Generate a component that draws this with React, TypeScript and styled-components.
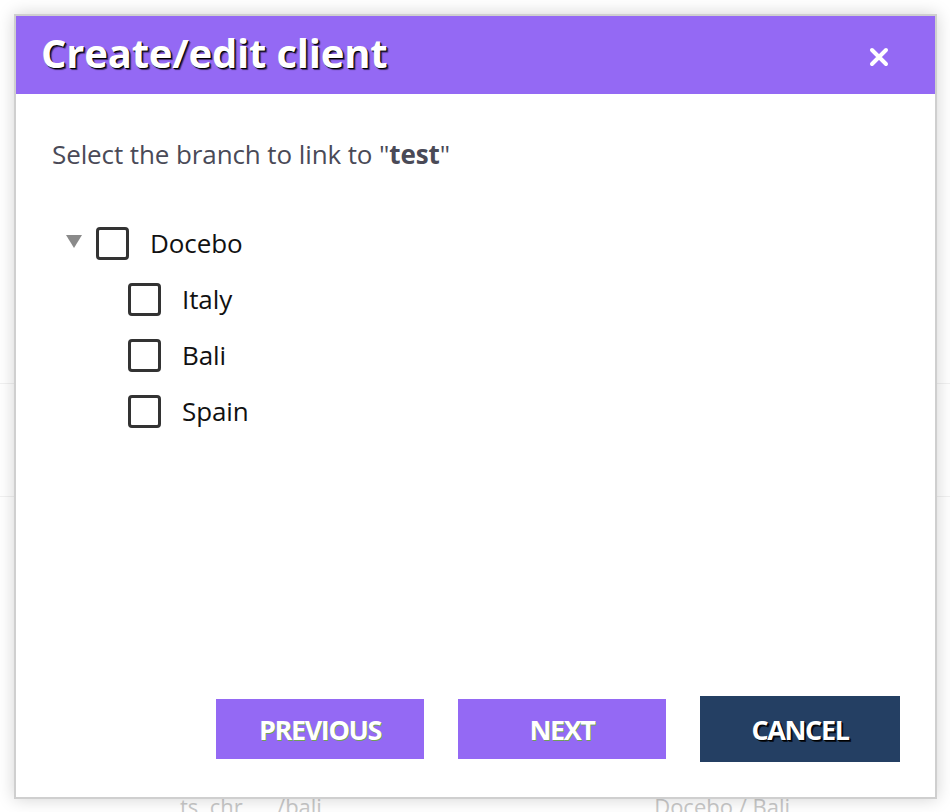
import React from "react";
import styled, { createGlobalStyle } from "styled-components";

const Global = createGlobalStyle`
  html, body { margin: 0; padding: 0; background: #ffffff; }
  body { font-family: "Open Sans", "Noto Sans", sans-serif; width: 950px; height: 812px; overflow: hidden; }
`;

const Page = styled.div`
  position: relative;
  width: 950px;
  height: 812px;
  overflow: hidden;
  background: #fff;
`;

const BgList = styled.div`
  display: flex;
  flex-direction: column;
  padding-top: 271px;
`;

const BgRow = styled.div<{ $h: number }>`
  height: ${(p) => p.$h}px;
  border-bottom: 1px solid #f1f1f1;
  display: flex;
  align-items: flex-end;
  justify-content: space-between;
  padding: 0 160px 0 180px;
  color: #c9c9c9;
  font-size: 22px;
  line-height: 26px;
`;

const Dialog = styled.div`
  position: absolute;
  left: 14px;
  top: 14px;
  width: 919px;
  height: 781px;
  border: 2px solid #cfcfcf;
  background: #fff;
  box-shadow: 0 0 16px rgba(0, 0, 0, 0.18);
  display: flex;
  flex-direction: column;
`;

const Header = styled.div`
  height: 78px;
  background: #9469f4;
  display: flex;
  align-items: center;
  justify-content: space-between;
  padding: 0 46px 0 25px;
`;

const Title = styled.h1`
  margin: 0;
  font-family: "Open Sans", sans-serif;
  font-weight: 700;
  font-size: 40px;
  line-height: 50px;
  color: #fff;
  letter-spacing: -0.2px;
  text-shadow: 1px 1px 0 #000, 2px 2px 1px rgba(0,0,0,0.6);
  margin-top: -4px;
`;

const Close = styled.button`
  border: none;
  background: transparent;
  padding: 0;
  width: 20px;
  height: 20px;
  display: flex;
  cursor: pointer;
  margin-top: 4px;
`;

const Body = styled.div`
  flex: 1;
  display: flex;
  flex-direction: column;
  padding: 43px 35px 35px 36px;
`;

const Lead = styled.p`
  margin: 0;
  font-size: 26px;
  color: #4a4a57;
  line-height: 34px;
  letter-spacing: -0.1px;
  b { font-weight: 700; }
`;

const Tree = styled.div`
  display: flex;
  flex-direction: column;
  margin-top: 56px;
  margin-left: 14px;
  gap: 24px;
`;

const Node = styled.div<{ $indent: number }>`
  display: flex;
  align-items: center;
  height: 32px;
  padding-left: ${(p) => p.$indent}px;
`;

const Caret = styled.span`
  width: 0;
  height: 0;
  border-left: 8px solid transparent;
  border-right: 8px solid transparent;
  border-top: 13px solid #8a8a8a;
  margin-right: 14px;
  margin-top: -4px;
`;

const Box = styled.span`
  width: 27px;
  height: 27px;
  border: 3px solid #333;
  border-radius: 4px;
  box-sizing: content-box;
  flex-shrink: 0;
`;

const Label = styled.span`
  font-size: 26px;
  color: #111;
  margin-left: 21px;
  line-height: 32px;
  letter-spacing: -0.1px;
`;

const Footer = styled.div`
  margin-top: auto;
  display: flex;
  justify-content: flex-end;
  align-items: center;
  gap: 34px;
`;

const Btn = styled.button<{ $dark?: boolean }>`
  border: none;
  cursor: pointer;
  width: ${(p) => (p.$dark ? 200 : 208)}px;
  height: ${(p) => (p.$dark ? 66 : 60)}px;
  background: ${(p) => (p.$dark ? "#243f63" : "#9469f4")};
  color: #fff;
  font-family: "Open Sans", sans-serif;
  font-weight: 700;
  font-size: 27px;
  letter-spacing: -1.4px;
  text-shadow: ${(p) => (p.$dark ? "1px 1px 0 #000, 2px 2px 0 rgba(0,0,0,0.7)" : "1px 1px 0 #6fa05a")};
  display: flex;
  align-items: center;
  justify-content: center;
`;

export default function App() {
  return (
    <Page>
      <Global />
      <BgList>
        <BgRow $h={112} />
        <BgRow $h={112} />
        <BgRow $h={322}>
          <span>ts&nbsp;&nbsp;chr&nbsp;&nbsp;&nbsp;&nbsp;&nbsp;&nbsp;/bali</span>
          <span>Docebo / Bali</span>
        </BgRow>
      </BgList>
      <Dialog>
        <Header>
          <Title>Create/edit client</Title>
          <Close aria-label="close">
            <svg width="20" height="20" viewBox="0 0 20 20">
              <path d="M3 3 L17 17 M17 3 L3 17" stroke="#fff" strokeWidth="4" strokeLinecap="round" />
            </svg>
          </Close>
        </Header>
        <Body>
          <Lead>
            Select the branch to link to "<b>test</b>"
          </Lead>
          <Tree>
            <Node $indent={0}>
              <Caret />
              <Box />
              <Label>Docebo</Label>
            </Node>
            <Node $indent={62}>
              <Box />
              <Label>Italy</Label>
            </Node>
            <Node $indent={62}>
              <Box />
              <Label>Bali</Label>
            </Node>
            <Node $indent={62}>
              <Box />
              <Label>Spain</Label>
            </Node>
          </Tree>
          <Footer>
            <Btn>PREVIOUS</Btn>
            <Btn>NEXT</Btn>
            <Btn $dark>CANCEL</Btn>
          </Footer>
        </Body>
      </Dialog>
    </Page>
  );
}
